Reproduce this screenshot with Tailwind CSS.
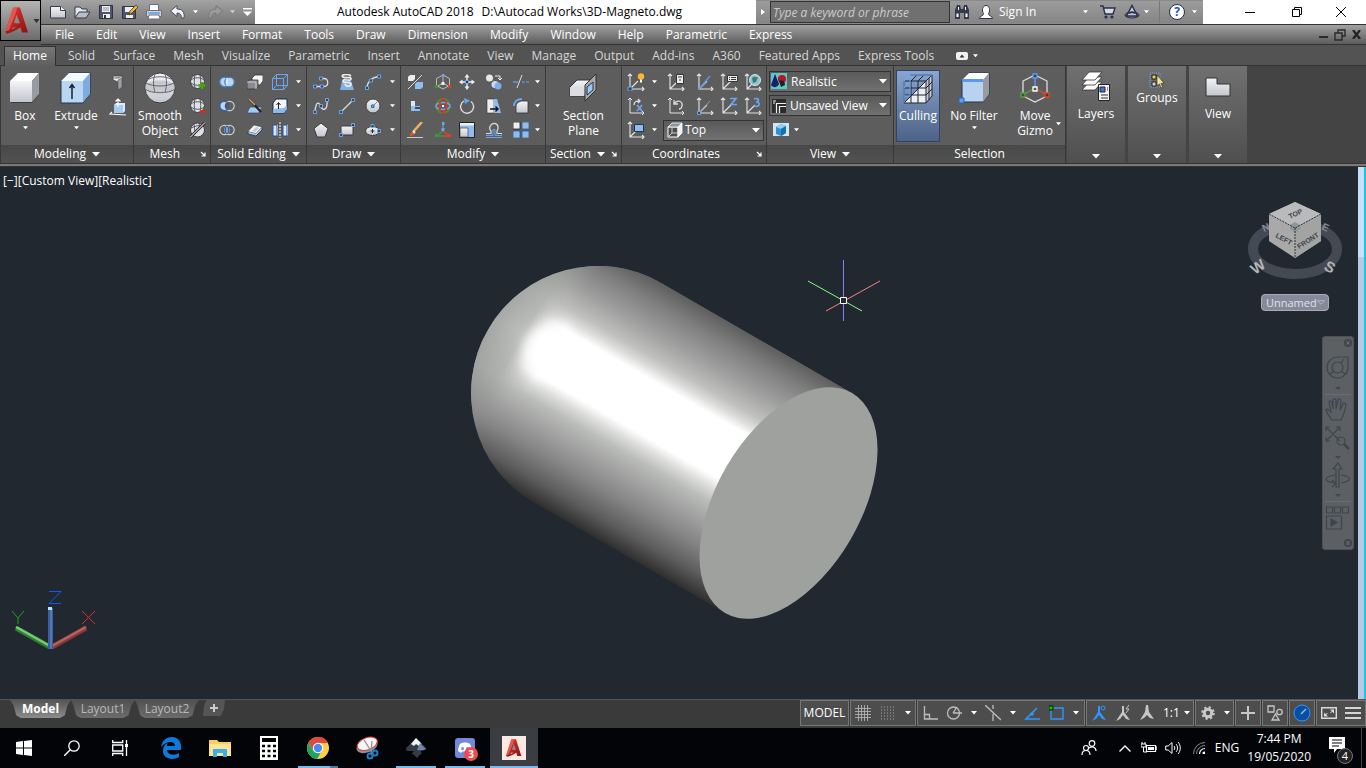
<!DOCTYPE html>
<html lang="en">
<head>
<meta charset="utf-8">
<meta name="viewport" content="width=device-width, initial-scale=1">
<title>Autodesk AutoCAD 2018</title>
<script src="https://cdn.jsdelivr.net/npm/@tailwindcss/browser@4"></script>
</head>
<body class="flex h-screen min-h-[480px] flex-col overflow-hidden bg-[#212830] font-['Open_Sans','Noto_Sans',sans-serif] text-xs leading-4 text-white">

<svg class="absolute size-0" aria-hidden="true">
  <defs>
    <linearGradient id="face" x1="0" y1="0" x2="0" y2="1"><stop offset="0" stop-color="#f4f5f8"/><stop offset="1" stop-color="#c3c5cd"/></linearGradient>
    <linearGradient id="red" x1="0" y1="0" x2="1" y2="1"><stop offset="0" stop-color="#e8392f"/><stop offset="1" stop-color="#8c1114"/></linearGradient>
  </defs>
  <symbol id="dn" viewBox="0 0 6 4"><path d="M0 0h6L3 3.5z" fill="#fff"/></symbol>
  <symbol id="dn8" viewBox="0 0 8 5"><path d="M0 0h8L4 4.5z" fill="#fff"/></symbol>
  <symbol id="launch" viewBox="0 0 6 6"><path d="M1 1l4 4M5 1.500V5H1.500" fill="none" stroke="#fff" stroke-width="1.200"/></symbol>
  <symbol id="axes" viewBox="0 0 18 18"><path d="M3 1v15h14M1 3l2-2 2 2M15 14l2 2-2 2M3 16l8-8" fill="none" stroke="#e4e4e4" stroke-width="1.100"/></symbol>
  <symbol id="logo" viewBox="0 0 24 26"><path d="M8 0h7l8 25h-6l-1.500-5H7.500L6 25H0z" fill="url(#red)"/><path d="M11.500 7L9 15.500l6 .5z" fill="#8b8b8b"/><path d="M8 0L0 25h3L11 5l1-5z" fill="#ee6a5f" opacity=".7"/><path d="M1 25c8-2 14-5 15-9" stroke="#a3191c" stroke-width="2.500" fill="none"/></symbol>
</svg>

<header class="flex shrink-0 bg-[#555]">
  <button aria-label="Application menu" class="flex h-[41px] w-[41px] shrink-0 items-center gap-1 border border-black bg-linear-to-b from-[#b4b4b4] to-[#6c6c6c] pl-1">
    <svg class="h-[27px] w-6 shrink-0"><use href="#logo"/></svg>
    <svg class="h-1 w-[7px] shrink-0" viewBox="0 0 6 4"><path d="M0 0h6L3 4z" fill="#26303c"/></svg>
  </button>
  <div class="flex min-w-0 flex-1 flex-col">
    <div class="flex h-6 items-stretch bg-white text-black">
      <div class="flex w-[214px] shrink-0 items-center bg-linear-to-b from-[#a3a3a3] to-[#777] pl-2">
        <div class="flex gap-[6px]">
        <button aria-label="New"><svg class="size-[18px]" viewBox="0 0 18 18"><path d="M1.500 3.500h10l5 4v7.500h-15z" fill="url(#face)" stroke="#343a4c"/><path d="M11.500 3.500v4h5" fill="#fff" stroke="#343a4c"/></svg></button>
        <button aria-label="Open"><svg class="size-[18px]" viewBox="0 0 18 18"><path d="M2 15V4h5l2 2h5v3" fill="#e6e7ea" stroke="#343a4c"/><path d="M2 15l4-6h11l-4 6z" fill="#b9bdc6" stroke="#343a4c"/></svg></button>
        <button aria-label="Save"><svg class="size-[18px]" viewBox="0 0 18 18"><path d="M2.500 2.500h13v13h-13z" fill="#4d566b" stroke="#2c3342"/><path d="M5 3h8v6H5zM6 11h7v4H6z" fill="#eee"/><path d="M6 5h6M6 7h6" stroke="#8b93a3"/><path d="M7 12h2v3H7z" fill="#2c3342"/></svg></button>
        <button aria-label="Save As"><svg class="size-[18px]" viewBox="0 0 18 18"><path d="M1.500 3.500h13v12h-13z" fill="#4d566b" stroke="#2c3342"/><path d="M4 4h8v5H4zM5 12h7v3H5z" fill="#eee"/><path d="M8 12l1-4 6-6 2 2-6 6z" fill="#f1b13f" stroke="#4c3a17" stroke-width=".8"/></svg></button>
        <button aria-label="Plot"><svg class="size-[18px]" viewBox="0 0 18 18"><path d="M4.500 1.500h9v6h-9z" fill="#fff" stroke="#6a7080"/><path d="M1.500 7.500h15v6h-15z" fill="#d2d4da" stroke="#6a7080"/><path d="M4 12h10l1 4H3z" fill="#fff" stroke="#6a7080"/><path d="M3 10h12" stroke="#5aa0e8" stroke-width="1.500"/></svg></button>
        <button aria-label="Undo"><svg class="size-[18px]" viewBox="0 0 18 18"><path d="M1.500 8L8 2.500V6c5 0 8 3 7 9h-3c1-3-1-5-4-5v3.500z" fill="#f1f2f5" stroke="#464d5c"/></svg></button>
        </div>
        <svg class="ml-[6px] h-1 w-[5px]"><use href="#dn"/></svg>
        <button aria-label="Redo" class="ml-2"><svg class="size-[18px]" viewBox="0 0 18 18"><path d="M16.500 8L10 2.500V6C5 6 2 9 3 15h3c-1-3 1-5 4-5v3.500z" fill="#9b9b9b" stroke="#777"/></svg></button>
        <svg class="ml-[6px] h-1 w-[5px] opacity-60"><use href="#dn"/></svg>
        <button aria-label="Customize" class="ml-2"><svg class="h-2 w-[9px]" viewBox="0 0 9 8"><path d="M0 0h9v1.500H0zM0 3.500h9L4.500 8z" fill="#fff"/></svg></button>
      </div>
      <div class="flex min-w-0 flex-1 items-center gap-2 pl-[82px] whitespace-nowrap"><span>Autodesk AutoCAD 2018</span><span>D:\Autocad Works\3D-Magneto.dwg</span></div>
      <div class="flex w-[447px] shrink-0 items-center border-y border-[#8a8a8a] bg-linear-to-b from-[#9c9c9c] to-[#858585] text-white">
        <button aria-label="Collapse search" class="flex w-[14px] shrink-0 justify-center"><svg class="h-[6px] w-1" viewBox="0 0 4 6"><path d="M0 0v6l4-3z" fill="#fff"/></svg></button>
        <input aria-label="Search" placeholder="Type a keyword or phrase" class="h-[22px] w-[180px] shrink-0 border border-[#333] bg-[#707070] px-[2px] italic text-white placeholder:text-[#ccc]">
        <button aria-label="Find" class="ml-1 shrink-0"><svg class="size-4" viewBox="0 0 16 16"><path d="M1 15V6l2-5h3l1 4h2l1-4h3l2 5v9h-5V9H6v6z" fill="#333a4a"/><path d="M2.500 13V9.500h2V13zm9 0V9.500h2V13zM4 3h1v3H4zm7 0h1v3h-1z" fill="#fff"/></svg></button>
        <button class="ml-2 flex shrink-0 items-center gap-[5px] whitespace-nowrap"><svg class="size-4" viewBox="0 0 16 16"><path d="M1.500 14.500c0-3 4-2 4-5-2-3-1-8 2.500-8s4.500 5 2.500 8c0 3 4 2 4 5z" fill="#fff" stroke="#2d3444"/></svg>Sign In</button>
        <div class="ml-auto flex items-center pr-[6px]">
        <svg class="h-1 w-[5px]"><use href="#dn"/></svg>
        <button aria-label="App store" class="ml-3"><svg class="size-4" viewBox="0 0 16 16"><path d="M0 2h3l2 8h8l2-6H4" fill="#d8dbe4" stroke="#27304a" stroke-width="1.400"/><circle cx="6" cy="13" r="1.600" fill="#27304a"/><circle cx="12" cy="13" r="1.600" fill="#27304a"/></svg></button>
        <button aria-label="Autodesk 360" class="ml-2"><svg class="size-4" viewBox="0 0 16 16"><path d="M8 1.500L2.500 12h11zM5 9.500a4 4 0 016 0" fill="#c5cce0" stroke="#27304a" stroke-width="1.500"/><ellipse cx="8" cy="11" rx="7" ry="3" fill="none" stroke="#27304a"/></svg></button>
        <svg class="ml-1 h-1 w-[5px]"><use href="#dn"/></svg>
        <span class="ml-[10px] h-[22px] w-px bg-[#777]"></span>
        <button aria-label="Help" class="ml-[9px] flex size-4 items-center justify-center rounded-full border border-[#27304a] bg-white font-bold text-[#1b55b5]">?</button>
        <svg class="ml-[7px] h-1 w-[5px]"><use href="#dn"/></svg>
        </div>
      </div>
      <div class="flex w-[163px] shrink-0 items-center justify-between self-stretch bg-white pr-5 pl-[39px]">
        <button aria-label="Minimize" class="flex size-4 items-center justify-center"><span class="h-px w-[10px] bg-black"></span></button>
        <button aria-label="Restore"><svg class="size-[10px]" viewBox="0 0 10 10"><path d="M2.500 2.500v-2h7v7h-2M.5 2.500h7v7h-7z" fill="none" stroke="#000"/></svg></button>
        <button aria-label="Close"><svg class="size-[10px]" viewBox="0 0 10 10"><path d="M0 0l10 10M10 0L0 10" stroke="#000"/></svg></button>
      </div>
    </div>
    <nav aria-label="Menu" class="flex h-[21px] items-center gap-[22px] border-y border-[#333] bg-linear-to-b from-[#a2a2a2] to-[#5c5c5c] pl-[14px] whitespace-nowrap">
      <a href="#">File</a><a href="#">Edit</a><a href="#">View</a><a href="#">Insert</a><a href="#">Format</a><a href="#">Tools</a><a href="#">Draw</a><a href="#">Dimension</a><a href="#">Modify</a><a href="#">Window</a><a href="#">Help</a><a href="#">Parametric</a><a href="#">Express</a>
      <div class="ml-auto flex items-center gap-[6px] pr-[5px]">
        <button aria-label="Minimize drawing" class="mt-1 h-[2px] w-[9px] bg-[#2b2b2b]"></button>
        <button aria-label="Restore drawing"><svg class="size-3" viewBox="0 0 12 12"><path d="M4 4V1h7v6H8M1 4h7v7H1z" fill="none" stroke="#2b2b2b" stroke-width="1.400"/></svg></button>
        <button aria-label="Close drawing"><svg class="size-[9px]" viewBox="0 0 9 9"><path d="M1 0l7 9M8 0L1 9" stroke="#222" stroke-width="2.200"/></svg></button>
      </div>
    </nav>
  </div>
</header>

<nav aria-label="Ribbon tabs" class="flex h-[21px] shrink-0 items-center gap-[18px] border-b border-[#333] bg-[#535353] pt-px pl-1 whitespace-nowrap text-[#d6d6d6]">
  <a href="#" class="-mr-[6px] flex h-5 items-center border border-b-0 border-[#303030] bg-linear-to-b from-[#777] to-[#5e5e5e] px-2 text-white">Home</a>
  <a href="#">Solid</a><a href="#">Surface</a><a href="#">Mesh</a><a href="#">Visualize</a><a href="#">Parametric</a><a href="#">Insert</a><a href="#">Annotate</a><a href="#">View</a><a href="#">Manage</a><a href="#">Output</a><a href="#">Add-ins</a><a href="#">A360</a><a href="#">Featured Apps</a><a href="#">Express Tools</a>
  <button aria-label="Minimize ribbon" class="ml-1 flex items-center gap-[5px]"><svg class="h-2 w-3" viewBox="0 0 12 8"><rect width="12" height="8" rx="2" fill="#f1f1f1"/><path d="M3.500 5.500h5L6 2.500z" fill="#333"/></svg><svg class="h-1 w-[5px]"><use href="#dn"/></svg></button>
</nav>

<section aria-label="Ribbon" class="flex h-[97px] shrink-0 bg-[#444]">

  <!-- Modeling -->
  <section class="flex w-[134px] shrink-0 flex-col border-x border-x-[#393939] bg-[#5d5d5d]">
    <div class="flex flex-1 pt-1">
      <button class="flex w-12 flex-col items-center"><svg class="mb-[2px] h-9 w-8" viewBox="0 0 32 36"><path d="M2 12l8-8h20v21l-7 8H2z" fill="#3c3c3c"/><path d="M1 11h22v21H1z" fill="url(#face)"/><path d="M1 11l8-8h21l-7 8z" fill="#fff"/><path d="M23 11l7-8v21l-7 8z" fill="#999ba3"/></svg><span>Box</span><svg class="mt-[2px] h-1 w-[5px]"><use href="#dn"/></svg></button>
      <button class="flex w-[54px] flex-col items-center"><svg class="mb-[2px] h-9 w-8" viewBox="0 0 32 36"><path d="M1 11l8-8h21v21l-7 9H1z" fill="#b9d6f2" stroke="#20355a"/><path d="M1 11l8-8h21l-7 8z" fill="#f5faff"/><path d="M23 11l7-8v21l-7 8z" fill="#7fabe0"/><path d="M12 29V15M9.500 18L12 14.500l2.500 3.500" stroke="#1b222e" stroke-width="1.500" fill="none"/></svg><span>Extrude</span><svg class="mt-[2px] h-1 w-[5px]"><use href="#dn"/></svg></button>
      <div class="flex flex-1 flex-col items-center gap-2 pt-1">
        <button aria-label="Polysolid"><svg class="size-4" viewBox="0 0 16 16"><path d="M3 2h10l-1 2v9l-4 3V8L3 6z" fill="#e9e9ec" stroke="#444" stroke-width=".8"/><path d="M8 6l4-2v9l-4 3zM3 4h6l3-2" fill="#9ea0a8" stroke="#555" stroke-width=".6"/></svg></button>
        <button aria-label="Presspull"><svg class="size-[18px]" viewBox="0 0 18 18"><path d="M5 7h9v8H5z" fill="#a6cbf3"/><path d="M5 7l2-2h9v8l-2 2V7z" fill="#dcebfb"/><path d="M9 9V1M6.500 3.500L9 1l2.500 2.500M3 14l-2 2 16 1" stroke="#fff" fill="none" stroke-width="1.200"/></svg></button>
      </div>
    </div>
    <button class="flex h-[18px] items-center justify-center gap-[6px] bg-linear-to-b from-[#484848] to-[#525252]">Modeling<svg class="h-[5px] w-2"><use href="#dn8"/></svg></button>
  </section>

  <!-- Mesh -->
  <section class="flex w-[77px] shrink-0 flex-col border-r border-r-[#393939] bg-[#5d5d5d]">
    <div class="flex flex-1 pt-1">
      <button class="flex w-[52px] flex-col items-center leading-[15px]"><svg class="mb-[2px] h-9 w-8" viewBox="0 0 32 36"><circle cx="16" cy="18" r="15" fill="url(#face)" stroke="#3d3d3d"/><path d="M1.500 15C6 9 26 9 30.500 15v5c-7 4-22 4-29 0z" fill="#c7c9cf"/><path d="M1 19c6 5 24 5 30 0M2 13c7 4 21 4 28 0M11 4c-2 6-2 12 0 18M21 4c2 6 2 12 0 18M5 9c6-3 16-3 22 0" fill="none" stroke="#646770"/></svg>Smooth<br>Object</button>
      <div class="flex flex-1 flex-col items-center gap-2 pt-1">
        <button aria-label="Smooth more"><svg class="size-4" viewBox="0 0 16 16"><circle cx="7.500" cy="7.500" r="7" fill="#dfe1e6" stroke="#3d3d3d"/><path d="M1 6c4-3 9-3 13 0M1 9c4 3 9 3 13 0M5 1c-1 5-1 8 0 13M10 1c1 5 1 8 0 13" fill="none" stroke="#555862"/><path d="M12 8v7M8.500 11.500h7" stroke="#4a0" stroke-width="2.400"/></svg></button>
        <button aria-label="Smooth less"><svg class="size-4" viewBox="0 0 16 16"><circle cx="7.500" cy="7.500" r="7" fill="#dfe1e6" stroke="#3d3d3d"/><path d="M1 6c4-3 9-3 13 0M1 9c4 3 9 3 13 0M5 1c-1 5-1 8 0 13M10 1c1 5 1 8 0 13" fill="none" stroke="#555862"/><path d="M10 13.500h6" stroke="#e42310" stroke-width="2.400"/></svg></button>
        <button aria-label="Refine mesh"><svg class="size-4" viewBox="0 0 16 16"><circle cx="7.500" cy="8" r="7" fill="#dfe1e6" stroke="#3d3d3d"/><path d="M1 6c4-2 8-3 11-2M4 2l1 8M9 1l1 5" fill="none" stroke="#555862"/><path d="M0 15.500L15 .5" stroke="#333" stroke-width="3"/><path d="M0 15.500L15 .5" stroke="#fff"/></svg></button>
      </div>
    </div>
    <div class="flex h-[18px] items-center justify-end gap-5 bg-linear-to-b from-[#484848] to-[#525252] pr-1">Mesh<button aria-label="Mesh settings"><svg class="size-[6px]"><use href="#launch"/></svg></button></div>
  </section>

  <!-- Solid Editing -->
  <section class="flex w-24 shrink-0 flex-col border-r border-r-[#393939] bg-[#5d5d5d]">
    <div class="grid flex-1 grid-cols-[32px_24px_26px_10px] grid-rows-[24px_24px_24px] place-items-center pt-1">
      <svg class="size-4" viewBox="0 0 16 16"><g fill="#b8d6f8" stroke="#4a83c8" stroke-width="1.300"><circle cx="5.500" cy="8" r="4.700"/><circle cx="10.500" cy="8" r="4.700"/></g><path d="M8 4v8" stroke="#fff"/></svg>
      <svg class="size-4" viewBox="0 0 16 16"><path d="M5 4l3-3h8v6l-3 4H5z" fill="#f6f6f6" stroke="#333" stroke-width=".8"/><path d="M0 8l2-2h9v7l-2 2H0z" fill="#888b92" stroke="#333" stroke-width=".8"/><path d="M0 8h9v7" stroke="#ccc" fill="none"/></svg>
      <svg class="size-4" viewBox="0 0 16 16"><path d="M.5 4.500h11v11H.5zM4.500.5h11v11h-11zM.5 4.500l4-4M11.500 4.500l4-4M11.500 15.500l4-4M.5 15.500l4-4" fill="none" stroke="#6aa6f0"/></svg>
      <svg class="h-1 w-[5px]"><use href="#dn"/></svg>
      <svg class="size-4" viewBox="0 0 16 16"><circle cx="10.500" cy="8" r="4.700" fill="none" stroke="#cfcfcf" stroke-width="1.200"/><circle cx="5.500" cy="8" r="4.700" fill="#b8d6f8" stroke="#2a63ad" stroke-width="1.300"/><path d="M8 4a4.700 4.700 0 000 8 5 5 0 000-8z" fill="#555"/></svg>
      <svg class="size-4" viewBox="0 0 16 16"><path d="M3 9h12l-3 6H0z" fill="#a5caf2" stroke="#37547c" stroke-width=".8"/><path d="M2 1l12 13" stroke="#222" stroke-width="2.200"/><path d="M2 1l6 6" stroke="#d8a45c" stroke-width="1.500"/></svg>
      <svg class="size-4" viewBox="0 0 16 16"><path d="M1 5l3-4h11v9l-3 5H1z" fill="#f0f4fa" stroke="#1f2b40"/><path d="M1 11l11-1 3-3v4l-3 4H1z" fill="#8db9ea"/><path d="M6.500 11V5M4.500 7l2-2.500 2 2.500" stroke="#222" fill="none"/></svg>
      <svg class="h-1 w-[5px]"><use href="#dn"/></svg>
      <svg class="size-4" viewBox="0 0 16 16"><circle cx="5.500" cy="8" r="4.700" fill="none" stroke="#cfcfcf" stroke-width="1.200"/><circle cx="10.500" cy="8" r="4.700" fill="none" stroke="#cfcfcf" stroke-width="1.200"/><path d="M8 4a5 5 0 000 8 5 5 0 000-8z" fill="#6aa6f0" stroke="#234c85"/></svg>
      <svg class="size-4" viewBox="0 0 16 16"><path d="M1 10l6-7 8 2v3l-6 6-8-2z" fill="#a5caf2" stroke="#23395c" stroke-width=".9"/><path d="M1 9.500L7 3l8 2-6 6.500z" fill="#f7f7f7" stroke="#555" stroke-width=".6"/><path d="M5 9l4-4 3 1-4 4z" fill="#c9c9c9"/></svg>
      <svg class="size-4" viewBox="0 0 16 16"><path d="M1 3h4v11H1zM11 3h4v11h-4z" fill="#d7e8fb" stroke="#2b5590"/><path d="M5 3l1-1v11l-1 1M15 3l1-1v11l-1 1" fill="#7fabe0"/><path d="M8 0v16" stroke="#fff" stroke-dasharray="2 1"/></svg>
      <svg class="h-1 w-[5px]"><use href="#dn"/></svg>
    </div>
    <button class="flex h-[18px] items-center justify-center gap-[6px] bg-linear-to-b from-[#484848] to-[#525252] whitespace-nowrap">Solid Editing<svg class="h-[5px] w-2"><use href="#dn8"/></svg></button>
  </section>

  <!-- Draw -->
  <section class="flex w-[94px] shrink-0 flex-col border-r border-r-[#393939] bg-[#5d5d5d]">
    <div class="grid flex-1 grid-cols-[28px_24px_28px_10px] grid-rows-[24px_24px_24px] place-items-center pt-1">
      <svg class="size-4" viewBox="0 0 16 16"><path d="M1.500 12.500H11c5 0 5-8 0-8H7.500" fill="none" stroke="#ddd" stroke-width="1.300"/><path d="M.5 11h3v3h-3zM7.500 11h3v3h-3zM6.500 3h3v3h-3z" fill="#345" stroke="#6aa6f0"/></svg>
      <svg class="size-4" viewBox="0 0 16 16"><path d="M3 7h9l3 9H1z" fill="#7fb2ea"/><path d="M12 2C8-1 1 1 4 3s8-1 8 2-8-1-8 2 8 0 8 3-5 3-6 0" fill="none" stroke="#eee" stroke-width="1.700"/></svg>
      <svg class="size-4" viewBox="0 0 16 16"><path d="M2 14C2 8 7 3 14 2.500" fill="none" stroke="#ddd" stroke-width="1.300"/><path d="M.5 12.500h3v3h-3zM4.500 5h3v3h-3zM12.500 1h3v3h-3z" fill="#345" stroke="#6aa6f0"/></svg>
      <svg class="h-1 w-[5px]"><use href="#dn"/></svg>
      <svg class="size-4" viewBox="0 0 16 16"><path d="M2 14C3 0 7 6 8 9s7 5 6-7" fill="none" stroke="#ddd" stroke-width="1.300"/><path d="M.5 12.500h3v3h-3zM6.500 6.500h3v3h-3zM12.500.5h3v3h-3z" fill="#345" stroke="#6aa6f0"/></svg>
      <svg class="size-4" viewBox="0 0 16 16"><path d="M2 14L14 2" stroke="#ddd" stroke-width="1.300"/><path d="M.5 12.500h3v3h-3zM12.500.5h3v3h-3z" fill="#345" stroke="#6aa6f0"/></svg>
      <svg class="size-4" viewBox="0 0 16 16"><circle cx="8" cy="8" r="7" fill="url(#face)" stroke="#444"/><path d="M8 8l4-4" stroke="#5a90d8"/><path d="M6.500 7h2.500v2.500H6.500z" fill="#6aa6f0" stroke="#356ab0"/></svg>
      <svg class="h-1 w-[5px]"><use href="#dn"/></svg>
      <svg class="size-4" viewBox="0 0 16 16"><path d="M8 1l7 5.500-3 8.500H4L1 6.500z" fill="url(#face)" stroke="#3c3c3c"/></svg>
      <svg class="size-4" viewBox="0 0 16 16"><path d="M2 4h12v9H2z" fill="url(#face)" stroke="#3c3c3c"/><path d="M.5 11.500h3v3h-3zM12.500 1.500h3v3h-3z" fill="#345" stroke="#6aa6f0"/></svg>
      <svg class="size-4" viewBox="0 0 16 16"><ellipse cx="7.500" cy="9" rx="7" ry="4.500" fill="url(#face)" stroke="#3c3c3c"/><path d="M7.500 7v4M5.500 9h4" stroke="#222"/><path d="M6 2.500h3v3H6zM12.500 7.500h3v3h-3z" fill="#345" stroke="#6aa6f0"/></svg>
      <svg class="h-1 w-[5px]"><use href="#dn"/></svg>
    </div>
    <button class="flex h-[18px] items-center justify-center gap-[6px] bg-linear-to-b from-[#484848] to-[#525252]">Draw<svg class="h-[5px] w-2"><use href="#dn8"/></svg></button>
  </section>

  <!-- Modify -->
  <section class="flex w-[145px] shrink-0 flex-col border-r border-r-[#393939] bg-[#5d5d5d]">
    <div class="grid flex-1 grid-cols-[28px_28px_20px_34px_20px_12px] grid-rows-[24px_24px_24px] place-items-center pt-1">
      <svg class="size-4" viewBox="0 0 16 16"><path d="M1 15L15 1" stroke="#ddd"/><path d="M1 3l2-2h5v4L6 7H1z" fill="#eee"/><path d="M8 10l2-2h6v5l-2 2H8z" fill="#8fbdf0"/></svg>
      <svg class="size-4" viewBox="0 0 16 16"><path d="M8 1l6.500 3.500v7L8 15l-6.500-3.500v-7zM8 2v7M8 9l-6 3.500M8 9l6 3.500" fill="none" stroke="#bbb"/><path d="M7 0h2.500v2.500H7z" fill="#6aa6f0"/><path d="M0 11h3v3H0z" fill="#3a9a2a"/><path d="M13 11h3v3h-3z" fill="#e0402a"/><path d="M6.500 8h3v3h-3z" fill="#eee"/></svg>
      <svg class="size-4" viewBox="0 0 16 16"><path d="M8 0l2.500 3.500h-5zM8 16l-2.500-3.500h5zM0 8l3.500-2.500v5zM16 8l-3.500 2.500v-5z" fill="#eee"/><path d="M8 3v10M3 8h10" stroke="#eee" stroke-width="1.400"/><path d="M6.500 6.500h3v3h-3z" fill="#345" stroke="#6aa6f0"/></svg>
      <svg class="size-4" viewBox="0 0 16 16"><circle cx="3.500" cy="4" r="3.500" fill="#e8e8ec"/><circle cx="9" cy="10.500" r="3.500" fill="#c9dcf4"/><circle cx="12" cy="12" r="3.500" fill="#7eaee8"/><path d="M9 2h5v4M12 4l2 2 2-2" fill="none" stroke="#eee"/></svg>
      <svg class="size-4" viewBox="0 0 16 16"><path d="M0 8h5" stroke="#6aa6f0" stroke-width="1.300"/><path d="M4 14l5-13" stroke="#ddd"/><path d="M9 8h7" stroke="#6aa6f0" stroke-dasharray="3 1"/></svg>
      <svg class="h-1 w-[5px]"><use href="#dn"/></svg>
      <svg class="size-4" viewBox="0 0 16 16"><path d="M4 3h4v5h5v5H4z" fill="#8fbdf0"/><path d="M4 3h4v5H4z" fill="#dfe9f5"/><path d="M8 9h5v2H8z" fill="#2b4b78"/></svg>
      <svg class="size-4" viewBox="0 0 16 16"><circle cx="8" cy="8" r="7" fill="none" stroke="#3d9a30" stroke-width="1.500"/><ellipse cx="8" cy="8" rx="7" ry="3.500" fill="none" stroke="#6aa6f0" stroke-width="1.600"/><ellipse cx="8" cy="8" rx="3.500" ry="7" fill="none" stroke="#e03420" stroke-width="1.700"/><path d="M7 7h2v2H7z" fill="#fff"/></svg>
      <svg class="size-4" viewBox="0 0 16 16"><path d="M5 3a6.500 6.500 0 107 .5" fill="none" stroke="#ddd" stroke-width="1.400"/><path d="M5 0l6 2.500L6 6z" fill="#6aa6f0"/></svg>
      <svg class="size-4" viewBox="0 0 16 16"><path d="M1 1h7v14H1z" fill="#eee" stroke="#333" stroke-width=".6"/><path d="M8 1h3l4 14H8z" fill="#8fbdf0"/><path d="M4 11h8M9.500 8.500L12 11l-2.500 2.500" fill="none" stroke="#111" stroke-width="1.400"/></svg>
      <svg class="size-4" viewBox="0 0 16 16"><path d="M3 15V9c0-4 3-6 7-6h5v12z" fill="url(#face)" stroke="#333" stroke-width=".8"/><path d="M1 8c0-4 3-7 8-7" fill="none" stroke="#6aa6f0" stroke-width="2"/></svg>
      <svg class="h-1 w-[5px]"><use href="#dn"/></svg>
      <svg class="size-4" viewBox="0 0 16 16"><path d="M0 15.500h16" stroke="#ccc"/><path d="M15 0L6 10" stroke="#f0b45a" stroke-width="2.500"/><path d="M3 14c0-3 2-5 4-4 2 2-1 4-4 4z" fill="#e0522a"/><path d="M6 9l2 2" stroke="#eee" stroke-width="2"/></svg>
      <svg class="size-4" viewBox="0 0 16 16"><path d="M8 2v8" stroke="#6aa6f0"/><path d="M8 9l-6.500 5H8" fill="none" stroke="#3d9a30" stroke-width="1.300"/><path d="M8 9l6.500 5H8" fill="none" stroke="#e0402a" stroke-width="1.300"/><path d="M7 0h2.500v3H7zM6.500 6h3v3h-3z" fill="#6aa6f0"/><path d="M0 12h3v3H0z" fill="#3d9a30"/><path d="M13 12h3v3h-3z" fill="#e0402a"/></svg>
      <svg class="size-4" viewBox="0 0 16 16"><path d="M.5.5h15v15H.5z" fill="#8fbdf0" stroke="#222"/><path d="M1 1h14v2.500H1z" fill="#eee"/><path d="M1 6h8v9H1z" fill="url(#face)" stroke="#444" stroke-width=".7"/></svg>
      <svg class="size-4" viewBox="0 0 16 16"><path d="M0 11.500h5V9a4 4 0 01-1-4.500c2-4.500 7-4 8 0 .5 2 0 3-1 4.500v2.500h5" fill="none" stroke="#ddd" stroke-width="1.200"/><path d="M0 15.500h16M0 13.500h7V7.500h2v6h7" fill="none" stroke="#6aa6f0"/></svg>
      <svg class="size-4" viewBox="0 0 16 16"><path d="M0 0h7v7H0z" fill="#eee" stroke="#222" stroke-width=".8"/><path d="M9 0h7v7H9zM0 9h7v7H0zM9 9h7v7H9z" fill="#8fbdf0" stroke="#2e5a98" stroke-width=".8"/></svg>
      <svg class="h-1 w-[5px]"><use href="#dn"/></svg>
    </div>
    <button class="flex h-[18px] items-center justify-center gap-[6px] bg-linear-to-b from-[#484848] to-[#525252]">Modify<svg class="h-[5px] w-2"><use href="#dn8"/></svg></button>
  </section>

  <!-- Section -->
  <section class="flex w-[76px] shrink-0 flex-col border-r border-r-[#393939] bg-[#5d5d5d]">
    <button class="flex flex-1 flex-col items-center pt-1 leading-[15px]"><svg class="mb-[2px] h-9 w-8" viewBox="0 0 32 36"><path d="M2 17l7-7h13v13l-5 3H2z" fill="url(#face)" stroke="#333"/><path d="M2 17h14v9H2z" fill="#dcdde2"/><path d="M17 15L28 4v16L17 31z" fill="#a9a9ad" stroke="#333"/><path d="M19 17l6-5v8l-6 5z" fill="#9cc5f2" stroke="#234"/></svg><span class="text-center">Section<br>Plane</span></button>
    <button class="flex h-[18px] items-center justify-center gap-[6px] bg-linear-to-b from-[#484848] to-[#525252]">Section<svg class="h-[5px] w-2 shrink-0"><use href="#dn8"/></svg><svg class="size-[6px] shrink-0"><use href="#launch"/></svg></button>
  </section>

  <!-- Coordinates -->
  <section class="flex w-[145px] shrink-0 flex-col border-r border-r-[#393939] bg-[#5d5d5d]">
    <div class="grid flex-1 grid-cols-[28px_8px_36px_22px_26px_22px] grid-rows-[24px_24px_24px] place-items-center pt-1">
      <svg class="size-[18px]" viewBox="0 0 18 18"><use href="#axes"/><path d="M1 14h4v4H1z" fill="#345" stroke="#6aa6f0"/><circle cx="14" cy="3.500" r="3.200" fill="#ffb52e"/><path d="M13 6.500h2v3h-2z" fill="#fff"/></svg>
      <svg class="h-1 w-[5px]"><use href="#dn"/></svg>
      <svg class="size-[18px]" viewBox="0 0 18 18"><use href="#axes"/><path d="M9.500 1.500h7v9h-7z" fill="#eee" stroke="#333"/><path d="M11 4h4M12 7h2" stroke="#333"/></svg>
      <svg class="size-[18px]" viewBox="0 0 18 18"><use href="#axes"/><path d="M3 16L14 3" stroke="#5a95e8" stroke-width="1.500"/></svg>
      <svg class="size-[18px]" viewBox="0 0 18 18"><use href="#axes"/><path d="M7.500 2.500h10v6h-10z" fill="#eee" stroke="#333"/><path d="M9 4.500h1m1 0h5M9 6.500h1m1 0h5" stroke="#333"/></svg>
      <svg class="size-[18px]" viewBox="0 0 18 18"><use href="#axes"/><circle cx="11" cy="7" r="5.500" fill="#8bc7d8" stroke="#d7e5ea"/><path d="M8 5c3-3 4 0 6-1l-2 5-3 1z" fill="#3b7e68"/></svg>
      <svg class="size-[18px]" viewBox="0 0 18 18"><path d="M3 1v15h14M1 3l2-2 2 2M15 14l2 2-2 2" fill="none" stroke="#e4e4e4"/><path d="M7 8c0-4 3-4 6-4m-2-2l2 2-2 2" fill="none" stroke="#ddd" stroke-width="1.300"/><path d="M10 8l5 6M15 8l-5 6" stroke="#6aa6f0" stroke-width="1.800"/></svg>
      <svg class="h-1 w-[5px]"><use href="#dn"/></svg>
      <svg class="size-[18px]" viewBox="0 0 18 18"><path d="M3 1v15h14M1 3l2-2 2 2M15 14l2 2-2 2" fill="none" stroke="#e4e4e4"/><path d="M7 3v4h4M7 7c3-5 9-3 8 2 0 2-2 3-3 3" fill="none" stroke="#ddd" stroke-width="1.300"/></svg>
      <svg class="size-[18px]" viewBox="0 0 18 18"><use href="#axes"/><path d="M3 16L14 4" stroke="#999"/><path d="M1.500 14.500h3v3h-3z" fill="#345" stroke="#6aa6f0"/></svg>
      <svg class="size-[18px]" viewBox="0 0 18 18"><use href="#axes"/><path d="M10 1.500h6l-5 6h6" fill="none" stroke="#6aa6f0" stroke-width="1.700"/></svg>
      <svg class="size-[18px]" viewBox="0 0 18 18"><use href="#axes"/><path d="M10 2c5-2 6 3 2 3 5 0 4 6-2 4" fill="none" stroke="#6aa6f0" stroke-width="1.700"/></svg>
      <svg class="size-[18px]" viewBox="0 0 18 18"><use href="#axes"/><path d="M7.500 3.500h9v7h-9z" fill="#8fbdf0" stroke="#1f3658"/></svg>
      <svg class="h-1 w-[5px]"><use href="#dn"/></svg>
      <div class="relative col-span-4 ml-[5px] w-[101px] justify-self-start">
        <select aria-label="Named UCS" class="block h-[21px] w-full appearance-none border border-[#333] bg-linear-to-b from-[#5a5a5a] to-[#717171] pl-[21px] text-white"><option>Top</option></select>
        <svg class="absolute top-2 right-1 h-[5px] w-2"><use href="#dn8"/></svg>
        <svg class="absolute top-[2px] left-1 size-4" viewBox="0 0 16 16"><path d="M1 5h10v10H1z" fill="#4d4d4d" stroke="#fff"/><path d="M1 5l4-4h10l-4 4z" fill="#8d939c" stroke="#fff" stroke-width=".8"/><path d="M15 1v10l-4 4V5z" fill="#eee" stroke="#fff" stroke-width=".8"/><path d="M5 6v5h5M5 11l-3 3" fill="none" stroke="#ccc"/></svg>
      </div>
    </div>
    <div class="flex h-[18px] items-center justify-end gap-9 bg-linear-to-b from-[#484848] to-[#525252] pr-1">Coordinates<button aria-label="UCS settings"><svg class="size-[6px]"><use href="#launch"/></svg></button></div>
  </section>

  <!-- View -->
  <section class="flex w-[127px] shrink-0 flex-col border-r border-r-[#393939] bg-[#5d5d5d]">
    <div class="flex flex-1 flex-col gap-[3px] px-[2px] pt-[5px]">
      <div class="relative">
        <select aria-label="Visual style" class="block h-[21px] w-full appearance-none border border-[#333] bg-linear-to-b from-[#5a5a5a] to-[#717171] pl-[21px] text-white"><option>Realistic</option></select>
        <svg class="absolute top-[2px] left-[2px] size-4" viewBox="0 0 16 16"><path d="M0 0h16v16H0z" fill="#5cc9c9"/><path d="M4 1l4 10c-2 4-6 4-8 1z" fill="#1a1f6a"/><circle cx="11" cy="6" r="4" fill="#b81720"/><path d="M8 8c3-2 6 0 6 4l-4 2z" fill="#222"/></svg>
        <svg class="absolute top-2 right-1 h-[5px] w-2"><use href="#dn8"/></svg>
      </div>
      <div class="relative">
        <select aria-label="Named view" class="block h-[21px] w-full appearance-none border border-[#333] bg-linear-to-b from-[#5a5a5a] to-[#717171] pl-5 text-white"><option>Unsaved View</option></select>
        <svg class="absolute top-1 left-[3px] size-[14px]" viewBox="0 0 14 14"><path d="M0 0h14v14H0z" fill="#2b2b2b"/><path d="M4.500 14V4.500H14M7.500 14V7.500H14M1 2h3M1 4h2" fill="none" stroke="#eee" stroke-width="1.200"/></svg>
        <svg class="absolute top-2 right-1 h-[5px] w-2"><use href="#dn8"/></svg>
      </div>
      <button aria-label="Viewport" class="mt-1 ml-1 flex items-center gap-[5px]"><svg class="h-[13px] w-4" viewBox="0 0 16 13"><path d="M0 0h16v13H0z" fill="#cfe6f5"/><path d="M3 4l5-3 5 2v7l-5 3-5-2z" fill="#2f93d0"/><path d="M3 4l5-3 5 2-5 3z" fill="#8fd0f4"/><path d="M8 6v7l5-3V3z" fill="#1a6fae"/></svg><svg class="h-1 w-[5px]"><use href="#dn"/></svg></button>
    </div>
    <button class="flex h-[18px] items-center justify-center gap-[6px] bg-linear-to-b from-[#484848] to-[#525252]">View<svg class="h-[5px] w-2"><use href="#dn8"/></svg></button>
  </section>

  <!-- Selection -->
  <section class="flex w-[172px] shrink-0 flex-col border-r border-r-[#393939] bg-[#5d5d5d]">
    <div class="flex flex-1 pt-1 pl-[2px]">
      <button class="flex h-[72px] w-11 flex-col items-center border border-[#2f4468] bg-linear-to-b from-[#8aa5cf] to-[#4d6285]"><svg class="mb-px h-9 w-8" viewBox="0 0 32 36"><path d="M2 32L24 10v22z" fill="#eceef2"/><path d="M24 10l6-6v21l-6 7z" fill="#c6c9d2"/><path d="M2 10h22v22H2zM2 10l6-6h22l-6 6M24 32l6-7V4M9 10v22M16 10v22M2 17h22M2 24h22M24 17l6-6M24 24l6-6M9 10l6-6M16 10l6-6M27 7v22M2 32L24 10" fill="none" stroke="#1f2633"/><path d="M2 10v22M8 4v21H2M2 17l6-6M2 10l6-6h22" fill="none" stroke="#69a9f5"/></svg><span>Culling</span></button>
      <button class="flex w-[68px] flex-col items-center"><svg class="mb-[2px] h-9 w-8" viewBox="0 0 32 36"><path d="M4 10l7-7h20v21l-6 8H4z" fill="#b7d3f0" stroke="#23344f"/><path d="M4 10l7-7h20l-6 7z" fill="#fff"/><path d="M25 10l6-7v21l-6 8z" fill="#999ba3"/><path d="M4 9h21v3H4z" fill="#5798f0"/><path d="M1 28h5v5H1z" fill="#5ba2f7" stroke="#2a62b5"/></svg><span>No Filter</span><svg class="mt-[2px] h-1 w-[5px]"><use href="#dn"/></svg></button>
      <button class="flex flex-1 items-center leading-[15px]"><span class="flex w-[54px] flex-col items-center self-start"><svg class="mb-[2px] h-9 w-8" viewBox="0 0 32 36"><path d="M16 5l12 6v15l-12 6-12-6V11z" fill="none" stroke="#e6e6e6" stroke-width="1.200"/><path d="M16 5v13" stroke="#5a9cf5" stroke-width="1.400"/><path d="M16 18L4 25" stroke="#5aa03a" stroke-width="1.400"/><path d="M16 18l12 7" stroke="#e04a28" stroke-width="1.400"/><path d="M14 4h4v4h-4z" fill="#345" stroke="#5a9cf5" stroke-width="1.300"/><path d="M14 17h4v4h-4z" fill="#555" stroke="#fff" stroke-width="1.300"/><path d="M2 23h4v4H2z" fill="#353" stroke="#5aa03a" stroke-width="1.300"/><path d="M26 23h4v4h-4z" fill="#533" stroke="#e04a28" stroke-width="1.300"/></svg>Move<br>Gizmo</span><svg class="mt-8 -ml-[6px] h-1 w-[5px]"><use href="#dn"/></svg></button>
    </div>
    <div class="flex h-[18px] items-center justify-center bg-linear-to-b from-[#484848] to-[#525252]">Selection</div>
  </section>

  <div class="flex gap-[3px] pl-px">
    <button class="flex w-[58px] flex-col items-center bg-linear-to-b from-[#707070] to-[#4f4f4f] pt-1 pb-1"><svg class="h-9 w-8" viewBox="0 0 32 36"><g fill="#fff" stroke="#333" stroke-width=".8"><path d="M2 20h13l7-8H9z"/><path d="M2 15h13l7-8H9z"/><path d="M2 10h13l7-8H9z"/></g><path d="M18.500 14.500h11v16h-11z" fill="#f4f4f4" stroke="#222"/><path d="M20 17h5v5h-5z" fill="#3f78c8" stroke="#223"/><path d="M27 18h1M27 20h1M21 25h7M21 28h7" stroke="#333"/></svg><span>Layers</span><svg class="mt-auto h-[5px] w-2"><use href="#dn8"/></svg></button>
    <button class="flex w-[58px] flex-col items-center bg-linear-to-b from-[#707070] to-[#4f4f4f] pt-1 pb-1"><svg class="h-5 w-4" viewBox="0 0 16 18"><path d="M1 2h10v14H1z" fill="none" stroke="#6aa6f0" stroke-dasharray="1 1"/><path d="M3 4h4v4H3z" fill="#e7d44c" stroke="#222"/><path d="M3 11h4v4H3z" fill="#cdd3dc" stroke="#222"/><path d="M8 4l7 8-3 .5 2 4-2 .5-1.500-4L8 15z" fill="#f2e39c" stroke="#333" stroke-width=".7"/></svg><span>Groups</span><svg class="mt-auto h-[5px] w-2"><use href="#dn8"/></svg></button>
    <button class="flex w-[58px] flex-col items-center bg-linear-to-b from-[#707070] to-[#4f4f4f] pt-1 pb-1"><svg class="h-9 w-8" viewBox="0 0 32 36"><path d="M4 8h11v6h13v12H4z" fill="url(#face)" stroke="#333"/></svg><span>View</span><svg class="mt-auto h-[5px] w-2"><use href="#dn8"/></svg></button>
  </div>
</section>
<div class="h-1 shrink-0 border-y border-[#333] bg-[#7a7a7a]"></div>

<main class="flex min-h-0 flex-1">
  <div class="relative min-w-0 flex-1 overflow-hidden bg-[#212830]">
    <!-- Capsule solid -->
    <svg class="absolute inset-0 size-full" viewBox="0 167 1358 532" preserveAspectRatio="xMidYMid slice" role="img" aria-label="3D capsule model">
      <defs>
        <linearGradient id="shade" gradientUnits="userSpaceOnUse" x1="0" y1="-127" x2="0" y2="127">
          <stop offset="0" stop-color="#5e5e5e"/><stop offset=".08" stop-color="#7e7e7e"/><stop offset=".18" stop-color="#9d9e9d"/><stop offset=".27" stop-color="#c0c1be"/><stop offset=".31" stop-color="#dcdddb"/><stop offset=".35" stop-color="#fff"/><stop offset=".555" stop-color="#fff"/><stop offset=".6" stop-color="#dcdddb"/><stop offset=".65" stop-color="#bbbdba"/><stop offset=".73" stop-color="#a0a1a0"/><stop offset=".82" stop-color="#848484"/><stop offset=".92" stop-color="#5c5c5c"/><stop offset="1" stop-color="#2e2e2e"/>
        </linearGradient>
        <linearGradient id="dome" gradientUnits="userSpaceOnUse" x1="0" y1="-127" x2="0" y2="127">
          <stop offset="0" stop-color="#6e6e6e"/><stop offset=".08" stop-color="#8a8b8a"/><stop offset=".18" stop-color="#a6a8a6"/><stop offset=".28" stop-color="#bcbebb"/><stop offset=".45" stop-color="#cdcfcc"/><stop offset=".64" stop-color="#b8bab7"/><stop offset=".72" stop-color="#a2a4a2"/><stop offset=".82" stop-color="#868686"/><stop offset=".92" stop-color="#5e5e5e"/><stop offset="1" stop-color="#2e2e2e"/>
        </linearGradient>
        <linearGradient id="blend" gradientUnits="userSpaceOnUse" x1="-94" y1="0" x2="-62" y2="0"><stop offset="0" stop-color="#fff" stop-opacity="0"/><stop offset="1" stop-color="#fff"/></linearGradient>
        <mask id="body" maskUnits="userSpaceOnUse" x="-130" y="-130" width="360" height="260"><path d="M-130-130H230V130H-130z" fill="url(#blend)"/></mask>
        <linearGradient id="tip" gradientUnits="userSpaceOnUse" x1="-127" y1="0" x2="-75" y2="0"><stop offset="0" stop-color="#8d8f8d" stop-opacity=".6"/><stop offset="1" stop-color="#8d8f8d" stop-opacity="0"/></linearGradient>
        <filter id="soft" x="-50%" y="-50%" width="200%" height="200%"><feGaussianBlur stdDeviation="6"/></filter>
        <clipPath id="hull"><path d="M0-127A127 127 0 000 127H221V-127z"/></clipPath>
      </defs>
      <g transform="translate(598 393) rotate(30)">
        <g clip-path="url(#hull)">
          <path d="M-128-128H222V128H-128z" fill="url(#dome)"/>
          <path d="M-128-128H0V128H-128z" fill="url(#tip)"/>
          <g mask="url(#body)"><path d="M-128-128H222V128H-128z" fill="url(#shade)"/></g>
          <ellipse cx="-66" cy="-12" rx="22" ry="28" fill="#fff" filter="url(#soft)"/>
        </g>
        <ellipse cx="220" cy="0" rx="72" ry="127" fill="#9fa19f"/>
      </g>
      <!-- Crosshair cursor -->
      <path d="M843.500 260v61" stroke="#8080ff"/>
      <path d="M808 281l54 30" stroke="#80ff80"/>
      <path d="M880 281l-54 30" stroke="#ff8080"/>
      <path d="M840.500 297.500h6v6h-6z" fill="#212830" stroke="#fff"/>
    </svg>
    <div class="absolute top-[6px] left-[3px] flex"><button>[−]</button><button>[Custom View]</button><button>[Realistic]</button></div>

    <!-- View cube -->
    <div class="absolute top-[31px] right-[15px] flex w-24 flex-col items-center gap-[10px]">
      <svg class="h-[86px] w-24" viewBox="0 0 96 86">
        <ellipse cx="48" cy="51" rx="42" ry="25" fill="none" stroke="#434a53" stroke-width="10"/>
        <g fill="#b3b5b8" font-family="Liberation Sans, sans-serif" font-weight="bold">
          <text transform="translate(8 77) rotate(-35)" font-size="15">W</text>
          <text transform="translate(76 71) rotate(30)" font-size="15">S</text>
          <text transform="translate(17 34) rotate(-25)" font-size="10" fill="#888c90">N</text>
          <text transform="translate(74 31) rotate(25)" font-size="10" fill="#888c90">E</text>
        </g>
        <path d="M48 4l26 12v27L48 60 22 43V16z" fill="#a9a9aa"/>
        <path d="M48 4l26 12-26 14-26-14z" fill="#b9babb"/>
        <path d="M48 30l26-14v27L48 60z" fill="#a3a3a4"/>
        <path d="M43 27l5-3 5 3v4l-5 4-5-4z" fill="#8e979c"/>
        <path d="M22 16l26 14 26-14M48 30v30" fill="none" stroke="#333" stroke-dasharray="2 1"/>
        <g fill="#3d434b" font-family="Liberation Sans, sans-serif" font-weight="bold">
          <text transform="translate(43 21) rotate(-25)" font-size="7">TOP</text>
          <text transform="translate(28 39) rotate(28)" font-size="7">LEFT</text>
          <text transform="translate(52 51) rotate(-32)" font-size="7">FRONT</text>
        </g>
      </svg>
      <button class="flex h-[17px] w-[68px] items-center justify-between rounded border border-[#aab] bg-[#85899a] px-1 text-[11px] text-[#e0e2ea]">Unnamed<svg class="h-[5px] w-2 shrink-0" viewBox="0 0 9 5"><path d="M.5.5h8l-4 4z" fill="none" stroke="#b9bcc8"/></svg></button>
    </div>

    <!-- Navigation bar -->
    <div class="absolute top-[169px] right-1 flex w-8 flex-col items-center rounded-[3px] border border-[#4c5155] bg-[#5c6063] text-[#3a3f49]">
      <svg class="h-[212px] w-[30px]" viewBox="1 0 30 212" fill="none" stroke="#3f444e" stroke-width="1.200">
        <circle cx="26" cy="6" r="3.500" fill="#44494f"/><path d="M24.500 4.500l3 3m0-3l-3 3" stroke="#6d7175" stroke-width="1"/>
        <path d="M16 20h10v10a10.500 10.500 0 11-10-10z"/><circle cx="15.500" cy="30.500" r="5.500"/><path d="M8 37l4-3m7 0l4 3M22 22l-3 4"/>
        <path d="M13 50h6l-3 3z" fill="#3f444e" stroke="none"/><path d="M3 57.500h26" stroke="#686c70"/>
        <path d="M10 83c-2-3-5-6-6-10 1-2 3 0 5 2l-2-10c1-2 3-1 3 1l1 6V63c1-2 3-1 3 0v9l2-9c1-2 3-1 3 1l-1 9 3-6c1-2 3 0 3 1-1 5-2 10-5 15z"/>
        <path d="M4 90l14 14m0-14L4 104M4 94v-4h4m6 0h4v4M4 100v4h4"/><circle cx="19" cy="104" r="4"/><path d="M22 107l5 5" stroke-width="2.500"/>
        <path d="M13 119h6l-3 3z" fill="#3f444e" stroke="none"/>
        <path d="M14 150v-18h-3l5-6 4 6h-3v18z"/><path d="M13 138c-12 2-12 7 1 8M19 138c10 1 12 6 0 8m-9-3l4 3-4 4"/>
        <path d="M13 157h6l-3 3z" fill="#3f444e" stroke="none"/><path d="M3 164.500h26" stroke="#686c70"/>
        <path d="M4.500 170h6v6h-6zM12.500 170h6v6h-6zM20.500 170h6v6h-6zM4.500 179h15v13h-15z"/><path d="M9 182v7l6-3.500z" fill="#3f444e"/>
        <circle cx="26" cy="206" r="3.500" fill="#44494f"/><path d="M24.500 205h3m-3 2h3" stroke="#777" stroke-width="1"/>
      </svg>
    </div>

    <!-- UCS icon -->
    <svg class="absolute bottom-10 left-2 h-[72px] w-[92px]" viewBox="0 0 92 72" role="img" aria-label="UCS axes">
      <path d="M8 41l34 19" stroke="#347a36" stroke-width="5"/><path d="M8 40l34 19" stroke="#74cc70" stroke-width="2.500"/>
      <path d="M78 41L44 60" stroke="#843a3a" stroke-width="5"/><path d="M78 40L44 59" stroke="#bb6060" stroke-width="2.500"/>
      <path d="M40 21h5v41h-5z" fill="#3a5e9e"/><path d="M42 21h2v41h-2z" fill="#5378b5"/><path d="M40 20h4v3h-4z" fill="#bfe0ff"/>
      <path d="M41 4.500h12L41 16.500h12" fill="none" stroke="#0a5df0"/>
      <path d="M4 24l6 7 6-7m-6 7v6" fill="none" stroke="#19a519"/>
      <path d="M74 24l13 13m0-13L74 37" stroke="#d82c2c"/>
    </svg>
  </div>
  <div class="flex w-2 shrink-0 flex-col border-r-2 border-[#18c4e8] bg-[#b6cae6]"><div class="h-[90px] bg-[#c9dff8]"></div></div>
</main>

<footer class="flex h-[29px] shrink-0 items-start justify-between border-t border-[#555] bg-[#3a3a3a]">
  <div class="flex pl-[10px] text-[#b8b8b8]">
    <button class="h-[18px] w-[61px] bg-linear-to-b from-[#555] to-[#8d8d8d] font-bold text-white [clip-path:polygon(0_0,100%_0,94%_30%,90%_85%,82%_100%,18%_100%,10%_85%,6%_30%)]">Model</button>
    <button class="h-[18px] w-[64px] bg-linear-to-b from-[#515151] to-[#6c6c6c] [clip-path:polygon(0_0,100%_0,94%_30%,90%_85%,82%_100%,15%_100%,8%_85%,4%_30%)]">Layout1</button>
    <button class="h-[18px] w-[64px] bg-linear-to-b from-[#515151] to-[#6c6c6c] [clip-path:polygon(0_0,100%_0,94%_30%,90%_85%,82%_100%,15%_100%,8%_85%,4%_30%)]">Layout2</button>
    <button aria-label="New layout" class="ml-1 flex h-4 w-[22px] items-center justify-center bg-[#555] [clip-path:polygon(15%_0,100%_0,95%_60%,80%_100%,0_100%,4%_40%)]"><svg class="size-2" viewBox="0 0 8 8"><path d="M4 0v8M0 4h8" stroke="#ccc" stroke-width="2"/></svg></button>
  </div>
  <div class="flex h-[26px] gap-px *:flex *:items-center *:border *:border-[#777] *:bg-[#4d4d4d]">
    <div class="w-[49px] justify-center"><button>MODEL</button></div>
    <div class="w-[66px] justify-between px-1">
      <svg class="size-4" viewBox="0 0 16 16"><path d="M3.500 0v16M6.500 0v16M9.500 0v16M12.500 0v16M0 3.500h16M0 6.500h16M0 9.500h16M0 12.500h16" stroke="#bdbdbd" stroke-width=".8"/></svg>
      <svg class="size-4" viewBox="0 0 16 16"><path d="M1 2h15M1 5h15M1 8h15M1 11h15M1 14h15" stroke="#aaa" stroke-dasharray="1 2"/></svg>
      <svg class="h-1 w-[6px]"><use href="#dn"/></svg>
    </div>
    <div class="w-[168px] justify-between pr-[5px] pl-1">
      <svg class="size-4" viewBox="0 0 16 16"><path d="M2.500 1v13H16M2.500 9.500h5v4.500" fill="none" stroke="#bdbdbd" stroke-width="1.300"/></svg>
      <svg class="size-4" viewBox="0 0 16 16"><circle cx="7.500" cy="8" r="6" fill="none" stroke="#bdbdbd" stroke-width="1.300"/><path d="M7 8h9M7 8l4-6" stroke="#bdbdbd" stroke-width="1.300"/></svg>
      <svg class="h-1 w-[6px]"><use href="#dn"/></svg>
      <svg class="size-4" viewBox="0 0 16 16"><path d="M0 0l16 15M8 0v4M8 9v7" stroke="#bdbdbd" stroke-width="1.300"/></svg>
      <svg class="h-1 w-[6px]"><use href="#dn"/></svg>
      <svg class="size-4" viewBox="0 0 16 16"><path d="M13 3L2 14h14" fill="none" stroke="#2f94ff" stroke-width="1.600"/><circle cx="8" cy="9" r="1.800" fill="#2f94ff"/></svg>
      <svg class="size-4" viewBox="0 0 16 16"><path d="M2 3h12v11H2z" fill="none" stroke="#2f94ff" stroke-width="1.400"/><path d="M0 1h4v4H0z" fill="#0c0" stroke="#020"/></svg>
      <svg class="h-1 w-[6px]"><use href="#dn"/></svg>
    </div>
    <div class="w-[108px] gap-2 pl-1">
      <svg class="size-4" viewBox="0 0 16 16"><path d="M7 1h2v6l6 8-4-1-3-4-3 4-4 2 6-9z" fill="#2f94ff"/><circle cx="12" cy="3" r="2" fill="none" stroke="#2f94ff"/></svg>
      <svg class="size-4" viewBox="0 0 16 16"><path d="M7 1h2v6l6 8-4-1-3-4-3 4-4 2 6-9z" fill="#c6c6c6"/><path d="M14 0l-3 4h3l-3 4" fill="none" stroke="#c6c6c6"/></svg>
      <svg class="size-4" viewBox="0 0 16 16"><path d="M7 0h2l1 7 5 7-4-1-3-3-3 3-4 2 5-8z" fill="#c6c6c6"/></svg>
      <button class="flex items-center gap-1">1:1<svg class="h-1 w-[6px]"><use href="#dn"/></svg></button>
    </div>
    <div class="w-[39px] gap-2 pl-1">
      <svg class="size-4" viewBox="0 0 16 16"><circle cx="8" cy="8" r="3.700" fill="none" stroke="#c8c8c8" stroke-width="3"/><circle cx="8" cy="8" r="5.800" fill="none" stroke="#c8c8c8" stroke-width="2" stroke-dasharray="2.280 2.270"/></svg>
      <svg class="h-1 w-[6px]"><use href="#dn"/></svg>
    </div>
    <div class="w-[26px] justify-center"><svg class="size-[14px]" viewBox="0 0 14 14"><path d="M7 0v14M0 7h14" stroke="#c8c8c8" stroke-width="2"/></svg></div>
    <div class="w-[26px] justify-center"><svg class="size-4" viewBox="0 0 16 16"><path d="M1 1h6v6H1zM5 15l3.500-6 3.500 6z" fill="none" stroke="#c8c8c8" stroke-width="1.300"/><circle cx="12.500" cy="7" r="2.700" fill="none" stroke="#c8c8c8" stroke-width="1.300"/></svg></div>
    <div class="w-[26px] justify-center"><svg class="size-[18px]" viewBox="0 0 18 18"><circle cx="9" cy="9" r="8" fill="#0a4f9e" stroke="#2f94ff"/><path d="M8 10l5-5" stroke="#7cc0ff" stroke-width="1.500"/></svg></div>
    <div class="w-[50px] justify-between px-1">
      <svg class="h-3 w-4" viewBox="0 0 16 12"><path d="M.7.700h14.600v10.600H.7z" fill="none" stroke="#ddd" stroke-width="1.400"/><path d="M9 2.500h4v4zM3 9.500h4l-4-4z" fill="#ddd"/><path d="M12 3.500L9.500 6M4 8.500L6.500 6" stroke="#ddd"/></svg>
      <svg class="h-3 w-4" viewBox="0 0 16 12"><path d="M0 1h16M0 6h16M0 11h16" stroke="#d4d4d4" stroke-width="1.800"/></svg>
    </div>
  </div>
</footer>

<nav aria-label="Taskbar" class="flex h-10 shrink-0 justify-between bg-[#020408]">
  <div class="flex *:flex *:h-full *:w-12 *:items-center *:justify-center">
    <button aria-label="Start"><svg class="size-4" viewBox="0 0 16 16"><path d="M0 2l7-1v6.500H0zM8 .9L16 0v7.500H8zM0 8.500h7V15l-7-1zM8 8.500h8V16l-8-1z" fill="#fff"/></svg></button>
    <button aria-label="Search"><svg class="size-4" viewBox="0 0 16 16"><circle cx="10" cy="6" r="5.200" fill="none" stroke="#fff" stroke-width="1.300"/><path d="M6 10l-6 6" stroke="#fff" stroke-width="1.400"/></svg></button>
    <button aria-label="Task view"><svg class="size-4" viewBox="0 0 16 16"><path d="M.7 0v2.500h10V0M.7 16v-2.500h10V16M.7 5h10v6H.7zM14.500 0v16" fill="none" stroke="#fff" stroke-width="1.300"/><path d="M13 4h3v3h-3z" fill="#fff"/></svg></button>
    <button aria-label="Edge" class="ml-[3px]"><svg class="h-[22px] w-5" viewBox="0 0 20 22"><path d="M0 10C1 3 6 0 11 0c6 0 9 5 9 9v4H6c0 5 8 6 12 3v4c-6 4-17 2-16-7 0-3 2-6 5-7-1 1-1 2-1 3h8c0-6-9-5-14 1z" fill="#0c7ad8"/></svg></button>
    <button aria-label="File Explorer" class="ml-px"><svg class="h-[18px] w-[22px]" viewBox="0 0 22 18"><path d="M0 1h8l2 2h12v14H0z" fill="#f5cf61"/><path d="M0 5h22v12H0z" fill="#fee394"/><path d="M4 18v-8h14v8h-4v-4H8v4z" fill="#35b0e8"/></svg></button>
    <button aria-label="Calculator" class="ml-px"><svg class="h-6 w-[18px]" viewBox="0 0 18 24"><path d="M0 0h18v24H0z" fill="#fff"/><path d="M2 2h14v4H2z" fill="#000"/><path d="M2 10h3m2.500 0h3m2.500 0h3M2 15h3m2.500 0h3m2.500 0h3M2 20h3m2.500 0h3m2.500 0h3" stroke="#000" stroke-width="2.500"/></svg></button>
    <button aria-label="Chrome" class="relative ml-px"><svg class="size-[22px]" viewBox="0 0 22 22"><circle cx="11" cy="11" r="11" fill="#fccf45"/><path d="M11 6h10A11 11 0 001.500 5.500l4.500 8z" fill="#dd4b3e"/><path d="M1.500 5.500A11 11 0 0010 22l5-8.500H6z" fill="#1ea362"/><circle cx="11" cy="11" r="5.200" fill="#fff"/><circle cx="11" cy="11" r="4.200" fill="#4a8af4"/></svg><span class="absolute bottom-0 left-1 h-[2px] w-8 bg-[#76b9ed]"></span><span class="absolute right-1 bottom-0 h-[2px] w-2 bg-[#4f7ba0]"></span></button>
    <button aria-label="Snipping Tool" class="ml-px"><svg class="size-6" viewBox="0 0 24 24"><ellipse cx="12" cy="10" rx="11" ry="6.500" transform="rotate(-20 12 10)" fill="#8a9097"/><ellipse cx="13" cy="8" rx="10.500" ry="6" transform="rotate(-20 12 10)" fill="#f6f6f6" stroke="#d83a3a"/><path d="M9 4l9 14M17 5l-1 12" stroke="#8a9097" stroke-width="1.300"/><circle cx="15" cy="20" r="2.500" fill="none" stroke="#1d82c8" stroke-width="2"/><circle cx="20" cy="17" r="2.500" fill="none" stroke="#1d82c8" stroke-width="2"/></svg></button>
    <button aria-label="Inkscape" class="relative ml-px"><svg class="h-[22px] w-5" viewBox="0 0 20 22"><path d="M10 1l10 10c0 2-4 2-5 3s2 2 0 3-2 2-4 4l-4-4c-2 0-1-2 1-2s-2-1-5-1-4-2-2-4z" fill="#343c48"/><path d="M10 1l5 5c1 2-1 1-2 3l-3-2-2 2-3-2z" fill="#eef3fa"/><path d="M14 6l6 6c-2 2-6 1-9 1z" fill="#6d86ad"/></svg><span class="absolute bottom-0 left-1 h-[2px] w-10 bg-[#76b9ed]"></span></button>
    <button aria-label="Discord, 3 notifications" class="relative ml-px"><svg class="size-5" viewBox="0 0 20 20"><rect width="20" height="20" rx="3" fill="#7289da"/><path d="M5 6c3-2 7-2 10 0 1.500 3 2 5 2 7l-3 2-1-1.500H7L6 15l-3-2c0-2 .5-4 2-7z" fill="#fff"/><circle cx="7.500" cy="10.500" r="1.500" fill="#7289da"/><circle cx="12.500" cy="10.500" r="1.500" fill="#7289da"/></svg><span class="absolute top-[19px] left-[23px] flex size-[14px] items-center justify-center rounded-full bg-[#ee4a50] text-[10px] font-bold">3</span><span class="absolute bottom-0 left-1 h-[2px] w-10 bg-[#76b9ed]"></span></button>
    <button aria-label="AutoCAD" class="relative ml-px bg-[#3a3d42]"><span class="flex size-6 items-center justify-center bg-[#fde9e2]"><svg class="h-5 w-4"><use href="#logo"/></svg></span><span class="absolute inset-x-0 bottom-0 h-[2px] bg-[#76b9ed]"></span></button>
  </div>
  <div class="mr-1 flex items-center border-r border-[#444] pr-2">
    <svg class="size-4" viewBox="0 0 16 16"><g fill="none" stroke="#fff" stroke-width="1.200"><circle cx="11" cy="3.500" r="2.800"/><circle cx="5" cy="8" r="2.500"/><path d="M1 15c0-6 8-6 8 0M8 8c3-2 7-1 7 3"/></g></svg>
    <svg class="ml-[22px] h-[7px] w-3" viewBox="0 0 12 7"><path d="M.5 6.500L6 1l5.500 5.500" fill="none" stroke="#fff" stroke-width="1.300"/></svg>
    <svg class="ml-[10px] h-3 w-4" viewBox="0 0 16 12"><path d="M5.500 3.500h9v6h-9zM15 5h1v3" fill="none" stroke="#fff" stroke-width="1.200"/><path d="M7 5h6v3H7z" fill="#fff"/><path d="M1 0v2M4 0v2M0 2h5v3H0zM2.500 5v5H6" stroke="#fff" fill="none"/></svg>
    <svg class="ml-2 size-4" viewBox="0 0 16 16"><path d="M.7 6h2.500L7 2.500v11L3.200 10H.7zM9 6c1 1 1 3 0 4M11 4c2 2 2 6 0 8M13 2c3 3 3 9 0 12" fill="none" stroke="#fff"/></svg>
    <svg class="ml-3 size-3" viewBox="0 0 12 12"><path d="M.5 12A11.500 11.500 0 0112 .5M3.500 12A8.500 8.500 0 0112 3.500" fill="none" stroke="#888"/><path d="M6.500 12A5.500 5.500 0 0112 6.500" fill="none" stroke="#fff" stroke-width="1.200"/><circle cx="11" cy="11" r="1.500" fill="#fff"/></svg>
    <span class="ml-[10px]">ENG</span>
    <div class="ml-2 text-center leading-[18px]"><div>7:44 PM</div><div>19/05/2020</div></div>
    <button aria-label="4 notifications" class="relative ml-[18px] h-6 w-6"><svg class="absolute top-0 left-0 h-[18px] w-4" viewBox="0 0 16 18"><path d="M0 1h16v12H8l-3 4v-4H0z" fill="#fff"/><path d="M3 4h10M3 7h10M3 10h7" stroke="#000"/></svg><span class="absolute right-0 -bottom-1 flex size-4 items-center justify-center rounded-full border border-[#777] bg-[#222] text-[11px]">4</span></button>
  </div>
</nav>
</body>
</html>
